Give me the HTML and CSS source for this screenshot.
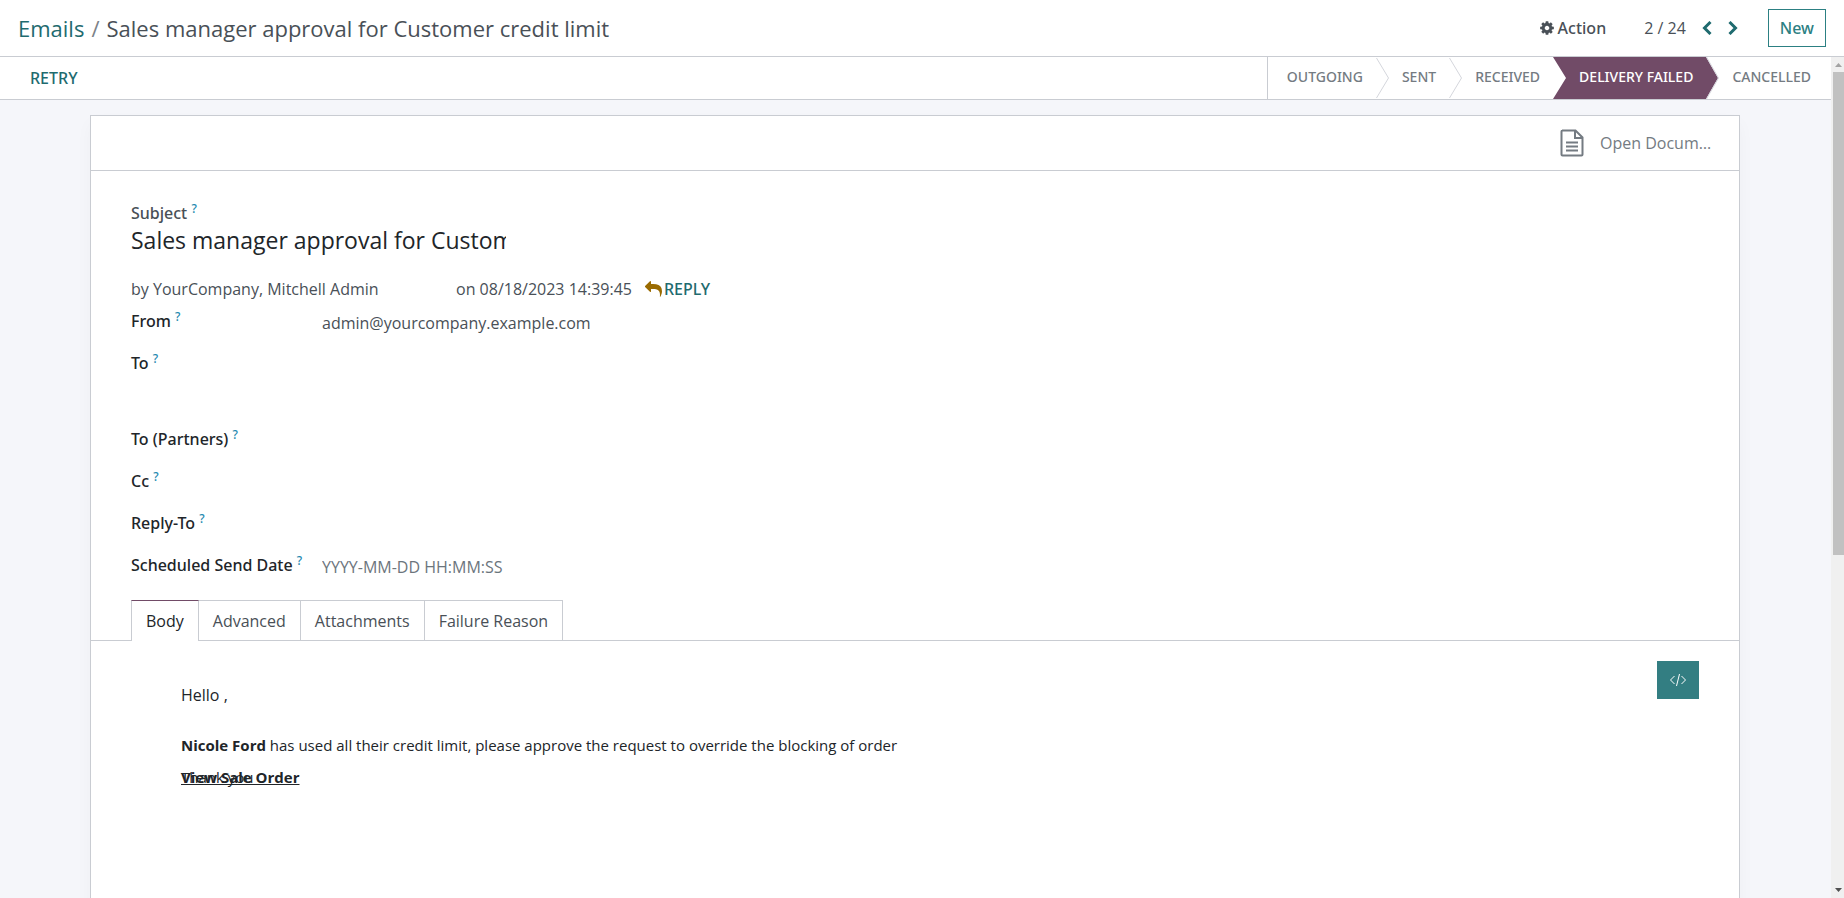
FILE: index.html
```html
<!DOCTYPE html>
<html lang="en">

<head>
    <meta charset="UTF-8">
    <meta name="viewport" content="width=device-width, initial-scale=1.0">
    <title>Emails - Sales manager approval for Customer credit limit</title>
    <link rel="stylesheet" href="styles.css">
</head>

<body>
    <header class="control-panel">
        <nav class="breadcrumb">
            <a href="#">Emails</a>
            <span class="separator">/</span>
            <span>Sales manager approval for Customer credit limit</span>
        </nav>
        <button class="action" type="button">
            <svg class="icon-cog" viewBox="0 0 1536 1792"><path d="M1024 896q0-106-75-181t-181-75-181 75-75 181 75 181 181 75 181-75 75-181zm512-109v222q0 12-8 23t-20 13l-185 28q-19 54-39 91 35 50 107 138 10 12 10 25t-9 23q-27 37-99 108t-94 71q-12 0-26-9l-138-108q-44 23-91 38-16 136-29 186-7 28-36 28h-222q-14 0-24.500-8.500t-11.500-21.500l-28-184q-49-16-90-37l-141 107q-10 9-25 9-14 0-25-11-126-114-165-168-7-10-7-23 0-12 8-23 15-21 51-66.500t54-70.500q-27-50-41-99l-183-27q-13-2-21-12.500t-8-23.500v-222q0-12 8-23t19-13l186-28q14-46 39-92-40-57-107-138-10-12-10-24 0-10 9-23 26-36 98.500-107.500t94.500-71.500q13 0 26 10l138 107q44-23 91-38 16-136 29-186 7-28 36-28h222q14 0 24.500 8.500t11.500 21.500l28 184q49 16 90 37l142-107q9-9 24-9 13 0 25 10 129 119 165 170 7 8 7 22 0 12-8 23-15 21-51 66.500t-54 70.500q26 50 41 98l183 28q13 2 21 12.500t8 23.500z"/></svg>
            Action
        </button>
        <div class="pager">
            <span class="pager-value">2 / 24</span>
            <button type="button" aria-label="Previous"><svg viewBox="0 0 10 14"><path d="M8.500 1 2.500 7l6 6"/></svg></button>
            <button type="button" aria-label="Next"><svg viewBox="0 0 10 14"><path d="M1.500 1 7.500 7l-6 6"/></svg></button>
        </div>
        <button class="new" type="button">New</button>
    </header>

    <div class="content">
        <main class="form-view">
            <div class="statusbar">
                <button class="retry" type="button">RETRY</button>
                <div class="stages">
                    <button type="button">OUTGOING</button>
                    <svg class="arrow" viewBox="0 0 13 42"><path class="line" d="M.5 1 12.500 21 .5 41"/></svg>
                    <button type="button">SENT</button>
                    <svg class="arrow" viewBox="0 0 13 42"><path class="line" d="M.5 1 12.500 21 .5 41"/></svg>
                    <button type="button">RECEIVED</button>
                    <svg class="arrow" viewBox="0 0 13 42"><path class="fill" d="M0 0H13V42H0L13 21Z"/></svg>
                    <button class="current" type="button">DELIVERY FAILED</button>
                    <svg class="arrow" viewBox="0 0 13 42"><path class="fill" d="M0 0 12 21 0 42Z"/><path class="line" d="M.5 0 12.500 21 .5 42"/></svg>
                    <button type="button">CANCELLED</button>
                </div>
            </div>

            <div class="sheet">
                <div class="button-box">
                    <button type="button">
                        <svg viewBox="0 0 24 28"><path d="M2 1.500H15.500L22.500 8.500V25.500Q22.500 26.500 21.500 26.500H2.500Q1.500 26.500 1.500 25.500V2.500Q1.500 1.500 2.500 1.500M15 1.500V9H22.500M6 13.500H18M6 17.500H18M6 21.500H18"/></svg>
                        <span>Open Document</span>
                    </button>
                </div>

                <div class="fields">
                    <div class="subject">
                        <label for="subject">Subject <sup>?</sup></label>
                        <input id="subject" type="text" value="Sales manager approval for Customer credit limit">
                    </div>

                    <div class="origin">
                        <span class="author">by YourCompany, Mitchell Admin</span>
                        <span class="date">on 08/18/2023 14:39:45</span>
                        <button class="reply" type="button">
                            <svg viewBox="0 0 1792 1792"><path d="M1792 1120q0 166-127 451-3 7-10.500 24t-13.500 30-13 22q-12 17-28 17-15 0-23.500-10t-8.500-25q0-9 2.500-26.500t2.500-23.500q5-68 5-123 0-112-19.500-200.500t-54-153.500-89-112-115-76.500-137.500-45-149.500-22-159.500-6.500h-224v256q0 26-19 45t-45 19-45-19l-512-512q-19-19-19-45t19-45l512-512q19-19 45-19t45 19 19 45v256h224q713 0 875 403 53 134 53 333z"/></svg>
                            REPLY
                        </button>
                    </div>

                    <div class="row">
                        <label for="from">From <sup>?</sup></label>
                        <input id="from" type="text" value="admin@yourcompany.example.com">
                    </div>
                    <div class="row tall">
                        <label for="to">To <sup>?</sup></label>
                        <textarea id="to"></textarea>
                    </div>
                    <div class="row">
                        <label for="partners">To (Partners) <sup>?</sup></label>
                        <input id="partners" type="text">
                    </div>
                    <div class="row">
                        <label for="cc">Cc <sup>?</sup></label>
                        <input id="cc" type="text">
                    </div>
                    <div class="row">
                        <label for="reply-to">Reply-To <sup>?</sup></label>
                        <input id="reply-to" type="text">
                    </div>
                    <div class="row">
                        <label for="scheduled">Scheduled Send Date <sup>?</sup></label>
                        <input id="scheduled" type="text" placeholder="YYYY-MM-DD HH:MM:SS">
                    </div>
                </div>

                <div class="tabs" role="tablist">
                    <button class="active" type="button" role="tab" aria-selected="true">Body</button>
                    <button type="button" role="tab">Advanced</button>
                    <button type="button" role="tab">Attachments</button>
                    <button type="button" role="tab">Failure Reason</button>
                </div>

                <div class="tab-content">
                    <div class="mail">
                        <p class="hello">Hello ,</p>
                        <p><b>Nicole Ford</b> has used all their credit limit, please approve the request to override the blocking of order</p>
                        <p class="closing">Thank you <a href="#">View Sale Order</a></p>
                    </div>
                    <button class="code" type="button" aria-label="Code view">
                        <svg viewBox="0 0 18 14"><path d="M5.500 3 1.500 7l4 4M12.500 3l4 4-4 4M10.500 1 7.500 13"/></svg>
                    </button>
                </div>
            </div>
        </main>

        <div class="scrollbar">
            <svg viewBox="0 0 15 15"><path d="M4 10H11L7.500 6Z" fill="#a3a3a3"/></svg>
            <div class="thumb"></div>
            <svg viewBox="0 0 15 15"><path d="M4 5H11L7.500 9Z" fill="#505050"/></svg>
        </div>
    </div>
</body>

</html>
```

FILE: styles.css
```css
* {
    box-sizing: border-box;
}

body {
    display: flex;
    flex-direction: column;
    height: 100vh;
    margin: 0;
    overflow: hidden;
    font-family: "Open Sans", "Noto Sans", sans-serif;
    font-size: 16px;
    line-height: 24px;
    color: #495057;
    background: #fff;
}

button,
input,
textarea {
    font: inherit;
    color: inherit;
    border: none;
    padding: 0;
    margin: 0;
    background: none;
}

button {
    cursor: pointer;
    white-space: nowrap;
}

svg {
    display: block;
    flex: none;
    fill: currentColor;
}

/* Medium weight texts */
label,
.action,
.new,
.retry,
.reply,
.stages {
    font-family: "Noto Sans", sans-serif;
    font-weight: 500;
}

/* Control panel */
.control-panel {
    display: flex;
    align-items: center;
    flex: none;
    height: 57px;
    padding: 0 18px;
    border-bottom: 1px solid #c9ccd2;
}

.breadcrumb {
    display: flex;
    gap: 7px;
    margin-right: auto;
    font-size: 22px;
    line-height: 32px;
}

.breadcrumb a {
    color: #1f6b6f;
    text-decoration: none;
}

.separator {
    color: #7c8288;
}

.action {
    display: flex;
    align-items: center;
    gap: 4px;
}

.icon-cog {
    width: 14px;
    height: 16px;
}

.pager {
    display: flex;
    align-items: center;
    gap: 16px;
    margin: 0 30px 0 38px;
}

.pager svg {
    width: 10px;
    height: 14px;
    fill: none;
    stroke: #1f6b6f;
    stroke-width: 3;
}

.new {
    height: 38px;
    padding: 0 11px;
    border: 1px solid #2c8083;
    color: #2c8083;
}

/* Status bar */
.content {
    display: flex;
    flex: 1;
    min-height: 0;
}

.form-view {
    flex: 1;
    min-width: 0;
    overflow: hidden;
    background: #f5f6fa;
}

.statusbar {
    display: flex;
    justify-content: space-between;
    height: 43px;
    border-bottom: 1px solid #c9ccd2;
    background: #fff;
}

.retry {
    padding: 0 30px;
    color: #1f6b6f;
}

.stages {
    display: flex;
    padding: 0 7px 0 6px;
    border-left: 1px solid #c9ccd2;
    color: #747b82;
    font-size: 14px;
}

.stages button {
    padding: 0 13px 2px;
}

.stages .current {
    color: #fff;
    background: #714b67;
}

.arrow {
    width: 13px;
    height: 42px;
}

.arrow .line {
    fill: none;
    stroke: #d4d6dc;
}

.arrow .fill {
    fill: #714b67;
}

/* Sheet */
.sheet {
    min-height: 1400px;
    margin: 15px 91px 0 90px;
    border: 1px solid #c9ccd2;
    background: #fff;
    box-shadow: 0 8px 16px rgba(0, 0, 0, 0.03);
}

.button-box {
    display: flex;
    justify-content: flex-end;
    height: 55px;
    border-bottom: 1px solid #c9ccd2;
}

.button-box button {
    display: flex;
    align-items: center;
    gap: 16px;
    width: 179px;
    color: #747b82;
    text-align: left;
}

.button-box svg {
    width: 24px;
    height: 28px;
    fill: none;
    stroke: currentColor;
    stroke-width: 2;
}

.button-box span {
    width: 115px;
    overflow: hidden;
    text-overflow: ellipsis;
}

.fields {
    padding: 30px 40px 5px;
}

sup {
    color: #1f8ab0;
    font-size: 12px;
    line-height: 0;
}

.subject label {
    display: block;
}

.subject input {
    display: block;
    width: 375px;
    height: 30px;
    color: #212529;
    font-size: 23px;
}

.origin {
    display: flex;
    align-items: center;
    height: 32px;
    margin: 18px 0 4px;
}

.author {
    width: 325px;
}

.reply {
    display: flex;
    align-items: center;
    gap: 2px;
    margin-left: 13px;
    color: #1f6b6f;
}

.reply svg {
    width: 17px;
    height: 17px;
    fill: #9a6b01;
}

.row {
    display: flex;
    height: 42px;
}

.row label {
    width: 191px;
    color: #212529;
}

.row input,
.row textarea {
    flex: 1;
    height: 28px;
    resize: none;
}

.row input::placeholder {
    color: #6c757d;
    opacity: 1;
}

.row.tall {
    height: 76px;
}

/* Tabs */
.tabs {
    display: flex;
    padding: 0 40px;
    border-bottom: 1px solid #c9ccd2;
}

.tabs button {
    height: 40px;
    padding: 0 14px;
    border: 1px solid #c9ccd2;
    border-width: 1px 1px 0 0;
}

.tabs .active {
    height: 41px;
    margin-bottom: -1px;
    border-left-width: 1px;
    border-top-color: #714b67;
    color: #212529;
    background: #fff;
}

.tab-content {
    display: flex;
    align-items: flex-start;
    justify-content: space-between;
    padding: 20px 40px 0 90px;
}

.mail {
    padding-top: 22px;
    color: #212529;
    font-size: 15px;
}

.mail p {
    margin: 0 0 8px;
}

.mail .hello {
    margin-bottom: 26px;
    font-size: 16px;
}

/* the link covers the closing words */
.closing {
    position: relative;
}

.closing a {
    position: absolute;
    top: 0;
    left: 0;
    color: inherit;
    font-weight: 700;
}

.code {
    display: flex;
    align-items: center;
    justify-content: center;
    width: 42px;
    height: 38px;
    color: #fff;
    background: #337e82;
}

.code svg {
    width: 18px;
    height: 14px;
    fill: none;
    stroke: currentColor;
}

/* Scrollbar */
.scrollbar {
    display: flex;
    flex-direction: column;
    flex: none;
    width: 13px;
    overflow: hidden;
    background: #f0f0f0;
}

.scrollbar svg {
    width: 15px;
    height: 15px;
}

.thumb {
    height: 483px;
    margin: 0 0 auto 2px;
    background: #c1c1c1;
}
```
